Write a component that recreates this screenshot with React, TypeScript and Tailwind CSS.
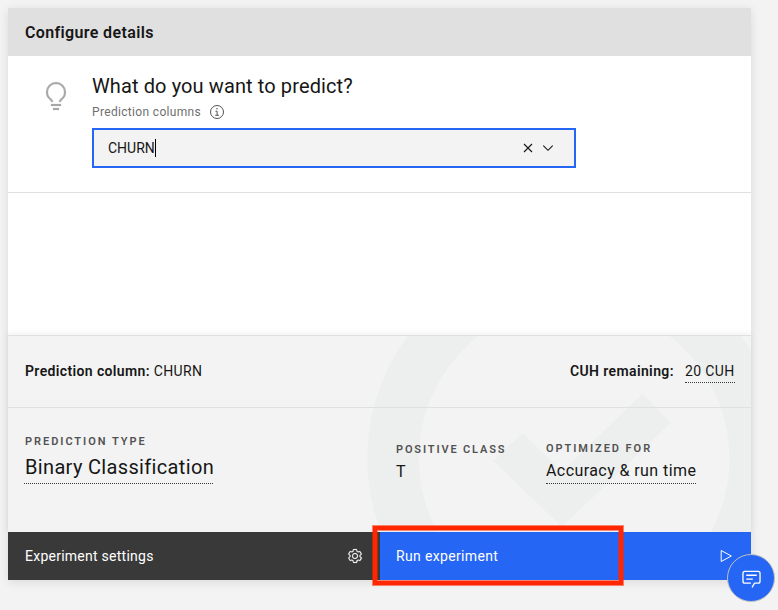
import React from "react";

function Bulb() {
  return (
    <svg className="h-8 w-8" viewBox="0 0 32 32" fill="#a8a8a8" stroke="#a8a8a8" strokeWidth="0.2">
      <path d="M11 24h10v2H11zM13 28h6v2h-6zM16 2A10 10 0 0 0 6 12a9.19 9.19 0 0 0 3.46 7.62c1 .93 1.54 1.46 1.54 2.38h2c0-1.84-1.11-2.87-2.19-3.86A7.2 7.2 0 0 1 8 12a8 8 0 0 1 16 0 7.2 7.2 0 0 1-2.82 6.14c-1.07 1-2.18 2-2.18 3.86h2c0-.92.53-1.45 1.54-2.39A9.18 9.18 0 0 0 26 12 10 10 0 0 0 16 2z" />
    </svg>
  );
}

function Info() {
  return (
    <svg className="h-4 w-4" viewBox="0 0 16 16" fill="none" stroke="#525252">
      <circle cx="8" cy="8" r="6.5" />
      <path d="M6.5 7.2h1.6v4M6.2 11.3h3.7" />
      <circle cx="8" cy="4.8" r=".75" fill="#525252" stroke="none" />
    </svg>
  );
}

function Gear() {
  return (
    <svg className="h-4 w-4" viewBox="0 0 16 16" fill="#f4f4f4" stroke="#f4f4f4" strokeWidth="0.15">
      <path d="M13.5,8.4c0-0.1,0-0.3,0-0.4c0-0.1,0-0.3,0-0.4l1-0.8c0.4-0.3,0.4-0.9,0.2-1.3l-1.2-2C13.3,3.2,13,3,12.6,3c-0.1,0-0.2,0-0.3,0.1l-1.2,0.4c-0.2-0.1-0.4-0.3-0.7-0.4l-0.3-1.3C10.1,1.3,9.7,1,9.2,1H6.8c-0.5,0-0.9,0.3-1,0.8L5.6,3.1C5.3,3.2,5.1,3.3,4.9,3.4L3.7,3C3.6,3,3.5,3,3.4,3C3,3,2.7,3.2,2.5,3.5l-1.2,2C1.1,5.9,1.2,6.4,1.6,6.8l0.9,0.9c0,0.1,0,0.3,0,0.4c0,0.1,0,0.3,0,0.4L1.6,9.2c-0.4,0.3-0.5,0.9-0.2,1.3l1.2,2C2.7,12.8,3,13,3.4,13c0.1,0,0.2,0,0.3-0.1l1.2-0.4c0.2,0.1,0.4,0.3,0.7,0.4l0.3,1.3c0.1,0.5,0.5,0.8,1,0.8h2.4c0.5,0,0.9-0.3,1-0.8l0.3-1.3c0.2-0.1,0.4-0.2,0.7-0.4l1.2,0.4c0.1,0,0.2,0.1,0.3,0.1c0.4,0,0.7-0.2,0.9-0.5l1.1-2c0.2-0.4,0.2-0.9-0.2-1.3L13.5,8.4z M12.6,12l-1.7-0.6c-0.4,0.3-0.9,0.6-1.4,0.8L9.2,14H6.8l-0.4-1.8c-0.5-0.2-0.9-0.5-1.4-0.8L3.4,12l-1.2-2l1.4-1.2c-0.1-0.5-0.1-1.1,0-1.6L2.2,6l1.2-2l1.7,0.6C5.5,4.2,6,4,6.5,3.8L6.8,2h2.4l0.4,1.8c0.5,0.2,0.9,0.5,1.4,0.8L12.6,4l1.2,2l-1.4,1.2c0.1,0.5,0.1,1.1,0,1.6l1.4,1.2L12.6,12z M8,11c-1.7,0-3-1.3-3-3s1.3-3,3-3s3,1.3,3,3C11,9.6,9.7,11,8,11z M8,6C6.9,6,6,6.8,6,7.9C6,7.9,6,8,6,8c0,1.1,0.8,2,1.9,2c0,0,0.1,0,0.1,0c1.1,0,2-0.8,2-1.9c0,0,0-0.1,0-0.1C10,6.9,9.2,6,8,6z" />
    </svg>
  );
}

function Chat() {
  return (
    <svg className="h-[21px] w-[21px]" viewBox="0 0 32 32" fill="#fff">
      <path d="M17.74 30 16 29l4-7h6a2 2 0 0 0 2-2V8a2 2 0 0 0-2-2H6a2 2 0 0 0-2 2v12a2 2 0 0 0 2 2h9v2H6a4 4 0 0 1-4-4V8a4 4 0 0 1 4-4h20a4 4 0 0 1 4 4v12a4 4 0 0 1-4 4h-4.84z" />
      <path d="M8 10h16v2H8zM8 16h10v2H8z" />
    </svg>
  );
}

export default function App() {
  return (
    <div className="relative h-[610px] w-[778px] overflow-hidden bg-[#f3f3f3] pl-2 pt-2 font-[Roboto,sans-serif] text-[#161616]">
      <div className="flex h-[572px] w-[743px] flex-col bg-white shadow-[0_2px_10px_rgba(0,0,0,0.1)]">
        <header className="flex h-12 shrink-0 items-center bg-[#e0e0e0] pl-[17px] pt-px">
          <h1 className="whitespace-nowrap text-base font-semibold tracking-[0.36px]">Configure details</h1>
        </header>
        <section className="flex h-[137px] shrink-0 border-b border-[#e0e0e0]">
          <div className="w-[84px] shrink-0 pl-8 pt-6"><Bulb /></div>
          <div className="w-[484px]">
            <h2 className="mt-4 h-7 whitespace-nowrap text-[20px] leading-7 tracking-[0.11px]">What do you want to predict?</h2>
            <div className="flex h-7 items-start gap-2 pt-1 text-xs text-[#6f6f6f]">
              <span className="w-[109px] whitespace-nowrap tracking-[0.33px]">Prediction columns</span>
              <Info />
            </div>
            <div className="flex h-10 items-center border-2 border-[#2566f5] bg-[#f3f3f3] pl-[14px] pr-[18px] text-sm">
              <span className="whitespace-nowrap">CHURN</span>
              <span className="h-[18px] w-px bg-black" />
              <svg className="ml-auto h-4 w-4" viewBox="0 0 16 16" fill="none" stroke="#161616" strokeWidth="1.1"><path d="m4 4 8 8M12 4l-8 8" /></svg>
              <svg className="ml-1 h-4 w-4" viewBox="0 0 16 16" fill="none" stroke="#161616" strokeWidth="1.1"><path d="m3.3 5.7 4.7 4.6 4.7-4.6" /></svg>
            </div>
          </div>
        </section>
        <div className="h-[142px] shrink-0" />
        <div className="relative h-[197px] shrink-0 border-t border-[#e0e0e0] bg-[#f3f3f3] shadow-[0_-2px_6px_rgba(0,0,0,0.06)]">
          <svg className="absolute inset-0 h-[196px] w-[743px]" viewBox="8 336 743 196">
            <circle cx="574.1" cy="458.5" r="181" fill="none" stroke="#edefee" strokeWidth="51.5" />
            <path d="M493.3 461 522.7 432.7 562 471.5 642.3 393.7 671 422.5 562 527z" fill="#edefee" />
          </svg>
          <div className="relative flex h-[72px] justify-between border-b border-[#e0e0e0] pl-[17px] pr-4 pt-[25px] text-sm">
            <p className="whitespace-nowrap tracking-[0.37px]"><b className="font-semibold">Prediction column:</b> CHURN</p>
            <p className="flex items-start whitespace-nowrap tracking-[0.38px]"><b className="w-[115px] font-semibold">CUH remaining:</b><span className="h-[22px] w-[50px] border-b border-dotted border-[#393939]">20 CUH</span></p>
          </div>
          <div className="relative flex h-[124px] whitespace-nowrap">
            <div className="w-[388px] pl-4 pt-6">
              <h3 className="pl-px text-[11px] font-semibold leading-5 tracking-[1.96px] text-[#525252]">PREDICTION TYPE</h3>
              <p className="h-8 w-[189px] border-b border-dotted border-[#393939] pl-px text-[20px] leading-[30px] tracking-[0.34px]">Binary Classification</p>
            </div>
            <div className="w-[150px] pt-8">
              <h3 className="text-[11px] font-semibold leading-5 tracking-[1.85px] text-[#525252]">POSITIVE CLASS</h3>
              <p>T</p>
            </div>
            <div className="pt-[31px]">
              <h3 className="text-[11px] font-semibold leading-5 tracking-[1.95px] text-[#525252]">OPTIMIZED FOR</h3>
              <p className="h-[25px] w-[150px] border-b border-dotted border-[#393939] tracking-[0.42px]">Accuracy &amp; run time</p>
            </div>
          </div>
        </div>
        <footer className="flex h-12 shrink-0 text-sm text-white">
          <button className="flex w-[372px] items-center justify-between bg-[#393939] px-[17px]"><span className="tracking-[0.25px]">Experiment settings</span><Gear /></button>
          <button className="flex w-[371px] items-center justify-between bg-[#2566f5] pl-4 pr-[17px]">
            <span className="tracking-[0.35px]">Run experiment</span>
            <svg className="h-4 w-4" viewBox="0 0 16 16" fill="none" stroke="#fff"><path d="M3.2 2.5 13.3 8 3.2 13.5z" /></svg>
          </button>
        </footer>
      </div>
      <div className="absolute left-[373px] top-[526px] h-[59px] w-[250px] border-4 border-[#ff2600] shadow-[0_0_0_1px_rgba(255,38,0,0.55),inset_0_0_0_1px_rgba(255,38,0,0.5)]" />
      <div className="absolute left-[727px] top-[554px] flex h-12 w-12 items-center justify-center rounded-full border border-[#c0c0c0] bg-[#2566f5]"><Chat /></div>
    </div>
  );
}
